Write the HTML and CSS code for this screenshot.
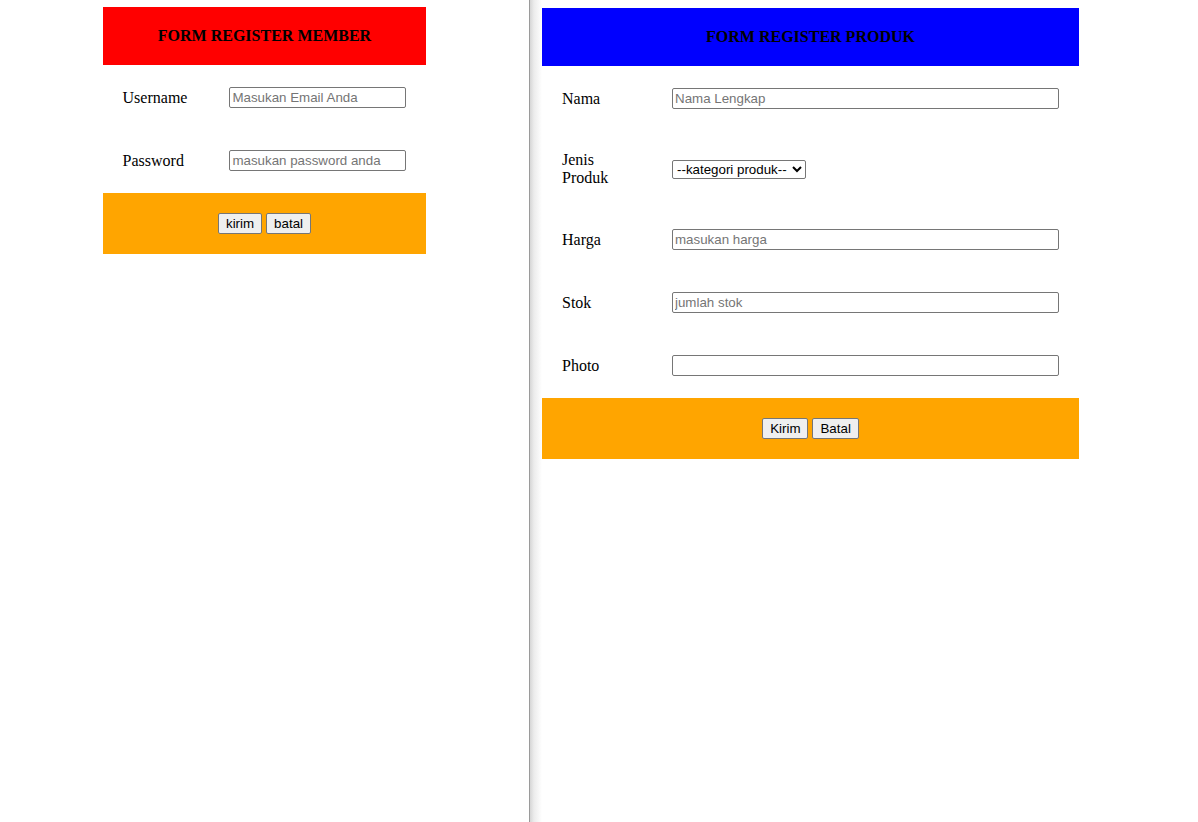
FILE: index.html
```html
<!DOCTYPE html>
<html lang="id">
<head>
<meta charset="utf-8">
<title>Form Register</title>
<link rel="stylesheet" href="styles.css">
</head>
<body>
<div class="pane pane-left">
  <form>
    <table class="form-table form-member">
      <tr><th colspan="2" class="head head-red">FORM REGISTER MEMBER</th></tr>
      <tr>
        <td class="label">Username</td>
        <td><input class="field field-short" type="text" placeholder="Masukan Email Anda"></td>
      </tr>
      <tr>
        <td class="label">Password</td>
        <td><input class="field field-short" type="password" placeholder="masukan password anda"></td>
      </tr>
      <tr>
        <td colspan="2" class="foot">
          <div class="actions"><button type="submit" class="btn">kirim</button><button type="reset" class="btn">batal</button></div>
        </td>
      </tr>
    </table>
  </form>
</div>
<div class="pane pane-right">
  <form>
    <table class="form-table form-produk">
      <tr><th colspan="2" class="head head-blue">FORM REGISTER PRODUK</th></tr>
      <tr>
        <td class="label label-fixed">Nama</td>
        <td><input class="field field-long" type="text" placeholder="Nama Lengkap"></td>
      </tr>
      <tr>
        <td class="label label-fixed">Jenis Produk</td>
        <td>
          <select class="select">
            <option>--kategori produk--</option>
            <option>Makanan</option>
            <option>Minuman</option>
          </select>
        </td>
      </tr>
      <tr>
        <td class="label label-fixed">Harga</td>
        <td><input class="field field-long" type="text" placeholder="masukan harga"></td>
      </tr>
      <tr>
        <td class="label label-fixed">Stok</td>
        <td><input class="field field-long" type="text" placeholder="jumlah stok"></td>
      </tr>
      <tr>
        <td class="label label-fixed">Photo</td>
        <td><input class="field field-long" type="text"></td>
      </tr>
      <tr>
        <td colspan="2" class="foot">
          <div class="actions"><button type="submit" class="btn">Kirim</button><button type="reset" class="btn">Batal</button></div>
        </td>
      </tr>
    </table>
  </form>
</div>
</body>
</html>
```
FILE: styles.css
```css
html, body {
  margin: 0;
  padding: 0;
  height: 100%;
  background: #ffffff;
}

body {
  display: flex;
  font-family: "Liberation Serif", "Times New Roman", serif;
  font-size: 16px;
  color: #000;
  overflow: hidden;
}

.pane {
  height: 822px;
}

.pane-left {
  width: 529px;
  border-right: 1px solid #9a9a9a;
  flex: none;
}

.pane-right {
  flex: 1;
  background: linear-gradient(to right, #d6d6d6 0px, #ececec 4px, #ffffff 12px);
}

.form-table {
  border-collapse: separate;
  border-spacing: 2px;
}

.form-member {
  margin: 5px auto 0;
}

.form-produk {
  margin: 6px 0 0 10px;
}

.form-table th,
.form-table td {
  padding: 20px;
  vertical-align: middle;
}

.head {
  font-weight: bold;
  font-size: 16px;
  line-height: 18px;
  text-align: center;
}

.head-red { background: #ff0000; }
.head-blue { background: #0000ff; }

.label {
  line-height: 18px;
  text-align: left;
}

.label-fixed {
  width: 68px;
}

.field {
  display: block;
  box-sizing: border-box;
  height: 21px;
  margin: 0;
  padding: 1px 2px;
  border: 1px solid #767676;
  border-radius: 2px;
  font-family: "Liberation Sans", Arial, sans-serif;
  font-size: 13.333px;
  color: #000;
  background: #fff;
}

.field::placeholder {
  color: #757575;
}

.field-short { width: 177px; }
.field-long { width: 387px; }

.select {
  display: block;
  box-sizing: border-box;
  width: 134px;
  height: 19px;
  margin: 0;
  padding: 0;
  border: 1px solid #767676;
  border-radius: 2px;
  font-family: "Liberation Sans", Arial, sans-serif;
  font-size: 13.333px;
  color: #000;
  background: #fff;
}

.foot {
  background: #ffa500;
}

.actions {
  display: flex;
  justify-content: center;
  gap: 4px;
}

.btn {
  box-sizing: border-box;
  height: 21px;
  margin: 0;
  padding: 0 7px;
  border: 1px solid #767676;
  border-radius: 2px;
  background: #efefef;
  font-family: "Liberation Sans", Arial, sans-serif;
  font-size: 13.333px;
  color: #000;
  line-height: 17px;
}
```
